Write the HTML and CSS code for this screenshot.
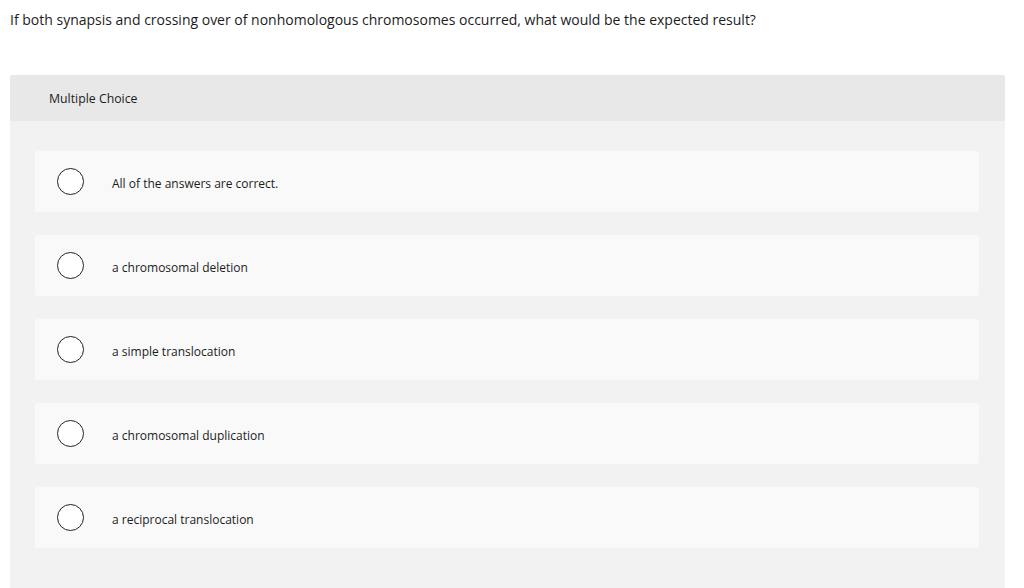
FILE: index.html
```html
<!DOCTYPE html>
<html>
<head>
<meta charset="utf-8">
<link rel="stylesheet" href="styles.css">
</head>
<body>
<p class="question">If both synapsis and crossing over of nonhomologous chromosomes occurred, what would be the expected result?</p>
<section class="panel">
  <header class="panel-head">Multiple Choice</header>
  <div class="options">
    <label class="option"><span class="radio"></span><span class="text">All of the answers are correct.</span></label>
    <label class="option"><span class="radio"></span><span class="text">a chromosomal deletion</span></label>
    <label class="option"><span class="radio"></span><span class="text">a simple translocation</span></label>
    <label class="option"><span class="radio"></span><span class="text">a chromosomal duplication</span></label>
    <label class="option"><span class="radio"></span><span class="text">a reciprocal translocation</span></label>
  </div>
</section>
</body>
</html>
```
FILE: styles.css
```css
html, body {
  margin: 0;
  padding: 0;
  background: #ffffff;
  font-family: "Open Sans", "Liberation Sans", Arial, sans-serif;
  color: #1c1c1c;
}
body {
  padding: 0 19px 0 10px;
  overflow: hidden;
}
.question {
  margin: 0;
  padding-top: 11px;
  font-size: 14px;
  line-height: 17px;
  height: 64px;
}
.panel {
  background: #f2f2f2;
  border-radius: 2px 2px 0 0;
  padding-bottom: 40px;
}
.panel-head {
  height: 46px;
  background: #e8e8e8;
  display: flex;
  align-items: center;
  padding-left: 39px;
  font-size: 12.3px;
  border-radius: 2px 2px 0 0;
}
.options {
  display: flex;
  flex-direction: column;
  gap: 23px;
  padding: 30px 26px 0 25px;
}
.option {
  height: 61px;
  background: #f9f9f9;
  border-radius: 3px;
  display: flex;
  align-items: center;
  padding-left: 22px;
  font-size: 12px;
}
.radio {
  width: 25px;
  height: 25px;
  border: 1px solid #222;
  border-radius: 50%;
  background: #fff;
  flex: none;
  margin-right: 28px;
}
.text {
  padding-top: 3px;
}
```
